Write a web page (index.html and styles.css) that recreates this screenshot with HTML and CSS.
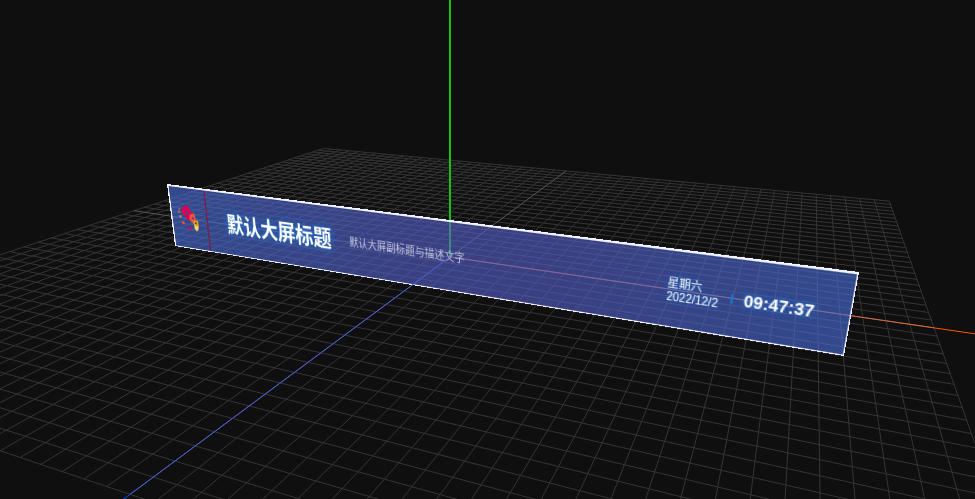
FILE: index.html
```html
<!DOCTYPE html>
<html lang="zh-CN">
<head>
<meta charset="utf-8">
<title>默认大屏标题</title>
<link rel="stylesheet" href="styles.css">
</head>
<body>
<main class="scene">
  <svg class="layer" id="floor" aria-hidden="true"></svg>
  <header class="banner" id="banner">
    <svg class="logo" viewBox="0 0 52 65" aria-hidden="true">
      <g transform="translate(0 4) scale(.93 .8)">
        <path fill="#dc0050" fill-rule="evenodd" d="M25 16 32 24 36 31 26 39 19 31 15 25ZM25 25 22 28 26 31 28 28Z"/>
        <path fill="#f0503c" fill-rule="evenodd" d="M29 30 37 27 39 36 35 43 28 38ZM33 33 32 36 35 37 36 34Z"/>
        <path fill="#f8a010" fill-rule="evenodd" d="M34 38 42 37 42 43 40 47 34 43ZM38 39 36 41 38 43 40 41Z"/>
        <path fill="#f8e060" d="M35 43 38 46 42 44 41 50 38 53 35 50Z"/>
        <path fill="#e8a830" d="M36 49h2v2h-2ZM12 23h2v2h-2ZM11 27h2v2h-2ZM12 33h3v3h-3Z"/>
        <path fill="#f0503c" d="M15 41h4v4h-4Z"/>
        <path fill="#dc0050" d="M24 49 27 47 30 49 27 53Z"/>
      </g>
    </svg>
    <h1 class="title">默认大屏标题</h1>
    <p class="subtitle">默认大屏副标题与描述文字</p>
    <div class="now">
      <div class="calendar"><span>星期六</span><span>2022/12/2</span></div>
      <time class="clock">09:47:37</time>
    </div>
  </header>
  <svg class="layer" id="front" aria-hidden="true"></svg>
</main>
<script src="scene.js"></script>
</body>
</html>
```

FILE: styles.css
```css
* { box-sizing: border-box; }
body {
  margin: 0;
  background: #0f0f0f;
  color: #fff;
  font-family: "Liberation Sans", "Noto Sans CJK SC", sans-serif;
}
.scene { position: relative; height: 100vh; overflow: hidden; }
.layer { position: absolute; inset: 0; width: 100%; height: 100%; }
.grid { stroke: #353535; stroke-width: 1; }
.center { stroke: #585858; stroke-width: 1; }
.axis-x { stroke: #d86838; stroke-width: 1; }
.axis-x-far { stroke: #ff5500; stroke-width: 1; }
.axis-y { stroke: #18c010; stroke-width: 2; }
.axis-z { stroke: #465ee0; stroke-width: 1; }
.axis-z-far { stroke: #0050ff; stroke-width: 1; }
/* The banner is a flat plane standing in the scene; scene.js projects it. */
.banner {
  position: absolute;
  top: 0;
  left: 0;
  width: 720px;
  height: 69px;
  display: flex;
  align-items: center;
  transform-origin: 0 0;
  padding-right: 27px;
  border: solid #f0f2ff;
  border-width: 2px 1px 1px 2px;
  background: linear-gradient(90deg, rgba(74, 112, 222, .6), rgba(86, 97, 204, .6) 45%, rgba(86, 97, 204, .6) 65%, rgba(74, 112, 222, .6));
}
.logo { width: 52px; height: 66px; border-right: 2px solid #78204c; }
.title {
  margin: 0 0 0 27px;
  font-size: 23px;
  line-height: 32px;
  font-weight: 700;
  text-shadow: 0 0 8px #1478d8;
}
.subtitle { margin: 0 0 0 22px; font-size: 11px; line-height: 16px; color: #c4c6e2; }
.now {
  display: flex;
  align-items: center;
  margin-left: auto;
  padding-top: 2px;
}
.calendar {
  display: flex;
  flex-direction: column;
  padding-right: 12px;
  font-size: 10px;
  line-height: 12px;
  text-shadow: 0 0 6px #1478d8;
  background: linear-gradient(#1474cc, #1474cc) right center / 2px 8px no-repeat;
}
.clock {
  margin-left: 9px;
  font-size: 14px;
  line-height: 20px;
  font-weight: 700;
  text-shadow: 0 0 6px #1478d8;
}
```

FILE: scene.js
```js
const VIEW = { width: 975, height: 499 };
const CELLS = 25;
const CORNERS = [[167, 184], [859, 272], [844, 356], [175, 246]];
const floor = document.getElementById('floor');
const front = document.getElementById('front');
const banner = document.getElementById('banner');

// Camera projection of a floor point; the grid spans -1..1 on both axes.
function project(u, v) {
  const d = 1 - 0.21 * u - 0.468 * v;
  return [(450 + 287.9 * u - 380.8 * v) / d, (257 + 2 * u + 6 * v) / d];
}

function line(svg, a, b, name) {
  const el = document.createElementNS('http://www.w3.org/2000/svg', 'line');
  el.setAttribute('x1', a[0]);
  el.setAttribute('y1', a[1]);
  el.setAttribute('x2', b[0]);
  el.setAttribute('y2', b[1]);
  el.setAttribute('class', name);
  svg.append(el);
}

// Maps the banner rectangle onto four projected corners.
function quadMatrix(w, h, p) {
  const [[x0, y0], [x1, y1], [x2, y2], [x3, y3]] = p;
  const dx1 = x1 - x2, dx2 = x3 - x2, sx = x0 - x1 + x2 - x3;
  const dy1 = y1 - y2, dy2 = y3 - y2, sy = y0 - y1 + y2 - y3;
  const det = dx1 * dy2 - dx2 * dy1;
  const g = (sx * dy2 - dx2 * sy) / det;
  const k = (dx1 * sy - sx * dy1) / det;
  return [
    (x1 - x0 + g * x1) / w, (y1 - y0 + g * y1) / w, 0, g / w,
    (x3 - x0 + k * x3) / h, (y3 - y0 + k * y3) / h, 0, k / h,
    0, 0, 1, 0,
    x0, y0, 0, 1
  ];
}

for (let i = -CELLS; i <= CELLS; i++) {
  const t = i / CELLS;
  const name = i === 0 ? 'center' : 'grid';
  line(floor, project(t, -1), project(t, 1), name);
  line(floor, project(-1, t), project(1, t), name);
}
line(floor, project(0, 0), project(1, 0), 'axis-x');
line(floor, project(1, 0), project(1.4, 0), 'axis-x-far');
line(floor, [450, 257], [450, -400], 'axis-y');
line(front, project(0, 0), project(0, 1), 'axis-z');
line(front, project(0, 1), project(0, 1.2), 'axis-z-far');

function resize() {
  const w = window.innerWidth, h = window.innerHeight;
  const s = Math.max(w / VIEW.width, h / VIEW.height);
  const ox = (w - VIEW.width * s) / 2, oy = (h - VIEW.height * s) / 2;
  for (const svg of [floor, front]) {
    svg.setAttribute('viewBox', `0 0 ${VIEW.width} ${VIEW.height}`);
    svg.setAttribute('preserveAspectRatio', 'xMidYMid slice');
  }
  const points = CORNERS.map(([x, y]) => [x * s + ox, y * s + oy]);
  banner.style.transform = `matrix3d(${quadMatrix(banner.offsetWidth, banner.offsetHeight, points)})`;
}
window.addEventListener('resize', resize);
resize();
```
